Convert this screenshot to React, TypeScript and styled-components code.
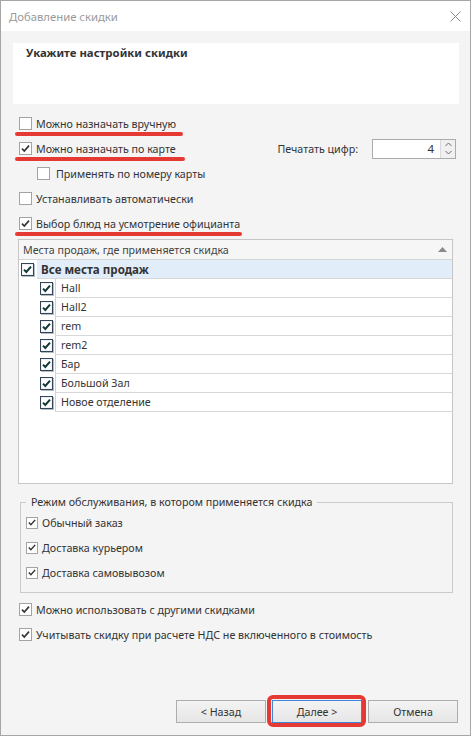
import React from 'react';
import styled, { createGlobalStyle } from 'styled-components';

const GlobalStyle = createGlobalStyle`
  html, body {
    margin: 0;
    padding: 0;
    background: #ffffff;
  }
  body {
    font-family: 'Noto Sans', 'Open Sans', sans-serif;
    font-size: 10.7px;
    color: #333;
  }
  * {
    box-sizing: border-box;
  }
`;

const Window = styled.div`
  width: 471px;
  height: 736px;
  border: 1px solid #a6a6a6;
  background: #f4f4f4;
  display: flex;
  flex-direction: column;
`;

const TitleBar = styled.div`
  height: 30px;
  background: #fff;
  display: flex;
  align-items: center;
  justify-content: space-between;
  padding: 0 9px 0 8px;
  font-size: 11.3px;
  color: #9a9a9a;
`;

const CloseIcon = () => (
  <svg width="11" height="11" viewBox="0 0 11 11">
    <path d="M0.5 0.5 L10.5 10.5 M10.5 0.5 L0.5 10.5" stroke="#8c8c8c" strokeWidth="1" />
  </svg>
);

const HeaderPanel = styled.div`
  margin: 12px 11px 0 12px;
  height: 61px;
  background: #fff;
  padding: 2px 13px;
  line-height: 16px;
  font-size: 11.4px;
  font-weight: 700;
  color: #333;
`;

const Options = styled.div`
  margin-top: 7px;
  padding: 0 14px 0 18px;
`;

const Row = styled.div<{ $indent?: number; $gap?: number }>`
  position: relative;
  height: 25px;
  display: flex;
  align-items: center;
  gap: ${(p) => p.$gap ?? 4}px;
  padding-left: ${(p) => p.$indent ?? 0}px;
  color: #333;
  white-space: nowrap;
`;

const RedMark = styled.span<{ $width: number }>`
  position: absolute;
  left: -4px;
  top: 21px;
  width: ${(p) => p.$width}px;
  height: 4px;
  border-radius: 2px;
  background: #e53a33;
`;

const Box = styled.span<{ $size?: number }>`
  flex: none;
  width: ${(p) => p.$size ?? 13}px;
  height: ${(p) => p.$size ?? 13}px;
  border: 1px solid #a3a3a3;
  background: #fff;
  display: flex;
  align-items: center;
  justify-content: center;
`;

const TreeBox = styled.span`
  flex: none;
  width: 13px;
  height: 13px;
  border: 1px solid #34455a;
  background: #fff;
  box-shadow: 1px 1px 0 #b4bcc6, inset 0 0 0 1px #eef2f6;
  display: flex;
  align-items: center;
  justify-content: center;
`;

const Check = ({ color = '#333', width = 1.6 }: { color?: string; width?: number }) => (
  <svg width="11" height="11" viewBox="0 0 11 11">
    <path d="M2 5.6 L4.3 8 L9 2.6" fill="none" stroke={color} strokeWidth={width} />
  </svg>
);

const CheckBox = ({ checked, size }: { checked: boolean; size?: number }) => (
  <Box $size={size}>{checked && <Check />}</Box>
);

const TreeCheck = () => (
  <TreeBox>
    <Check color="#123838" width={2} />
  </TreeBox>
);

const Spacer = styled.span`
  flex: 1;
`;

const DigitsLabel = styled.span`
  margin-right: 10px;
  color: #333;
`;

const Spinner = styled.div`
  width: 84px;
  height: 20px;
  border: 1px solid #ababab;
  background: #fff;
  display: flex;
`;

const SpinValue = styled.div`
  flex: 1;
  text-align: right;
  padding-right: 6px;
  line-height: 18px;
  font-size: 11.5px;
  color: #333;
`;

const SpinButtons = styled.div`
  width: 15px;
  border-left: 1px solid #d9d9d9;
  background: #f0f0f0;
  display: flex;
  flex-direction: column;
  align-items: center;
  justify-content: space-around;
  padding: 1px 0;
`;

const Chevron = ({ up }: { up?: boolean }) => (
  <svg width="7" height="5" viewBox="0 0 7 5">
    <path d={up ? 'M0.5 4 L3.5 1 L6.5 4' : 'M0.5 1 L3.5 4 L6.5 1'} fill="none" stroke="#6a6a6a" strokeWidth="1" />
  </svg>
);

const List = styled.div`
  margin: 3px 17px 0 17px;
  height: 245px;
  border: 1px solid #c6c6c6;
  background: #fff;
`;

const ListHeader = styled.div`
  height: 20px;
  border-bottom: 1px solid #d4d4d4;
  background: #f6f6f6;
  display: flex;
  align-items: center;
  justify-content: space-between;
  padding: 0 5px 0 4px;
  color: #444;
`;

const SortArrow = () => (
  <svg width="9" height="5" viewBox="0 0 9 5">
    <path d="M0 5 L4.5 0 L9 5 Z" fill="#8a8a8a" />
  </svg>
);

const TreeRow = styled.div<{ $child?: boolean }>`
  height: 19px;
  display: flex;
  align-items: center;
  gap: 2px;
  padding-left: ${(p) => (p.$child ? 21 : 2)}px;
`;

const Cell = styled.div<{ $root?: boolean }>`
  flex: 1;
  align-self: stretch;
  display: flex;
  align-items: center;
  padding-left: ${(p) => (p.$root ? 4 : 5)}px;
  margin-left: ${(p) => (p.$root ? 1 : 0)}px;
  background: ${(p) => (p.$root ? '#e1edf8' : '#fff')};
  border-left: ${(p) => (p.$root ? 'none' : '1px solid #d2d2d2')};
  border-bottom: 1px solid #d8d8d8;
  font-size: ${(p) => (p.$root ? 11.6 : 10.7)}px;
  font-weight: ${(p) => (p.$root ? 700 : 400)};
  color: #333;
`;

const Group = styled.fieldset`
  margin: 10px 17px 0 19px;
  padding: 0 0 7px 5px;
  border: 1px solid #cacaca;
  min-width: 0;
`;

const Legend = styled.legend`
  padding: 0 5px;
  line-height: 16px;
  color: #333;
`;

const Tail = styled.div`
  margin-top: 4px;
  padding-left: 18px;
`;

const ButtonBar = styled.div`
  margin-top: auto;
  margin-bottom: 12px;
  padding-right: 12px;
  display: flex;
  justify-content: flex-end;
  gap: 6px;
`;

const Button = styled.button<{ $focused?: boolean }>`
  position: relative;
  width: 90px;
  height: 23px;
  font: inherit;
  color: #333;
  background: linear-gradient(#f3f3f3, #e6e6e6);
  border: 1px solid ${(p) => (p.$focused ? '#3d86d8' : '#adadad')};
  padding: 0;
  ${(p) =>
    p.$focused &&
    `
    &::after {
      content: '';
      position: absolute;
      left: -6px;
      top: -6px;
      right: -5px;
      bottom: -5px;
      border: 4px solid #e53a33;
      border-radius: 6px;
    }
  `}
`;

const places = ['Hall', 'Hall2', 'rem', 'rem2', 'Бар', 'Большой Зал', 'Новое отделение'];
const modes = ['Обычный заказ', 'Доставка курьером', 'Доставка самовывозом'];

export default function App() {
  return (
    <>
      <GlobalStyle />
      <Window>
        <TitleBar>
          <span>Добавление скидки</span>
          <CloseIcon />
        </TitleBar>
        <HeaderPanel>Укажите настройки скидки</HeaderPanel>
        <Options>
          <Row>
            <CheckBox checked={false} />
            <span>Можно назначать вручную</span>
            <RedMark $width={168} />
          </Row>
          <Row>
            <CheckBox checked />
            <span>Можно назначать по карте</span>
            <RedMark $width={170} />
            <Spacer />
            <DigitsLabel>Печатать цифр:</DigitsLabel>
            <Spinner>
              <SpinValue>4</SpinValue>
              <SpinButtons>
                <Chevron up />
                <Chevron />
              </SpinButtons>
            </Spinner>
          </Row>
          <Row $indent={18} $gap={6}>
            <CheckBox checked={false} />
            <span>Применять по номеру карты</span>
          </Row>
          <Row>
            <CheckBox checked={false} />
            <span>Устанавливать автоматически</span>
          </Row>
          <Row>
            <CheckBox checked />
            <span>Выбор блюд на усмотрение официанта</span>
            <RedMark $width={227} />
          </Row>
        </Options>
        <List>
          <ListHeader>
            <span>Места продаж, где применяется скидка</span>
            <SortArrow />
          </ListHeader>
          <TreeRow>
            <TreeCheck />
            <Cell $root>Все места продаж</Cell>
          </TreeRow>
          {places.map((name) => (
            <TreeRow key={name} $child>
              <TreeCheck />
              <Cell>{name}</Cell>
            </TreeRow>
          ))}
        </List>
        <Group>
          <Legend>Режим обслуживания, в котором применяется скидка</Legend>
          {modes.map((m) => (
            <Row key={m}>
              <CheckBox checked size={12} />
              <span>{m}</span>
            </Row>
          ))}
        </Group>
        <Tail>
          <Row>
            <CheckBox checked />
            <span>Можно использовать с другими скидками</span>
          </Row>
          <Row>
            <CheckBox checked />
            <span>Учитывать скидку при расчете НДС не включенного в стоимость</span>
          </Row>
        </Tail>
        <ButtonBar>
          <Button>&lt; Назад</Button>
          <Button $focused>Далее &gt;</Button>
          <Button>Отмена</Button>
        </ButtonBar>
      </Window>
    </>
  );
}
